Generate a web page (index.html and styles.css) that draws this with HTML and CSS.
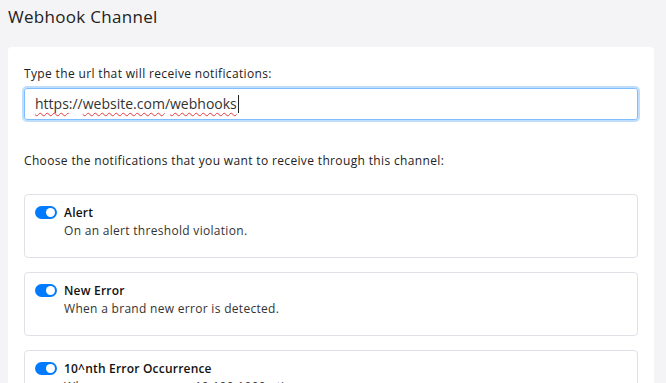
FILE: index.html
```html
<!DOCTYPE html>
<html>
<head>
<meta charset="utf-8">
<link rel="stylesheet" href="styles.css">
</head>
<body>
<div class="page">
  <h1 class="title">Webhook Channel</h1>
  <div class="card">
    <div class="label">Type the url that will receive notifications:</div>
    <div class="input"><span class="sp">https</span>://<span class="sp">website.com</span>/<span class="sp">webhooks</span><span class="caret"></span></div>
    <div class="label choose">Choose the notifications that you want to receive through this channel:</div>
    <div class="opts">
      <div class="opt">
        <span class="toggle"><span class="knob"></span></span>
        <div class="txt">
          <div class="name">Alert</div>
          <div class="desc">On an alert threshold violation.</div>
        </div>
      </div>
      <div class="opt">
        <span class="toggle"><span class="knob"></span></span>
        <div class="txt">
          <div class="name">New Error</div>
          <div class="desc">When a brand new error is detected.</div>
        </div>
      </div>
      <div class="opt">
        <span class="toggle"><span class="knob"></span></span>
        <div class="txt">
          <div class="name">10^nth Error Occurrence</div>
          <div class="desc">When an error occurs 10,100,1000+ times.</div>
        </div>
      </div>
    </div>
  </div>
</div>
</body>
</html>
```
FILE: styles.css
```css
html, body { margin: 0; padding: 0; background: #f4f4f6; }
body { font-family: "Open Sans", "Liberation Sans", sans-serif; color: #212529; overflow: hidden; }
.page { padding: 0 12px 0 8px; }
.title { margin: 0; padding-top: 5px; height: 42px; font-size: 17px; letter-spacing: 0.3px; font-weight: 400; color: #222; line-height: 24px; }
.card { background: #fff; border-radius: 4px; padding: 18px 16px 20px 16px; }
.label { font-size: 12px; letter-spacing: 0.35px; line-height: 18px; color: #222; }
.input { margin-top: 5px; height: 30px; border: 1px solid #80bdff; border-radius: 3px; box-shadow: 0 0 0 2px rgba(0,123,255,.25); padding: 0 10px; font-size: 14px; line-height: 30px; color: #333; display: flex; align-items: center; }
.sp { text-decoration: underline wavy #e53935; text-decoration-thickness: 1px; text-underline-offset: 3px; }
.caret { width: 1px; height: 18px; background: #222; margin-left: 1px; }
.choose { margin-top: 32px; }
.opts { margin-top: 24px; display: flex; flex-direction: column; gap: 14px; }
.opt { box-sizing: border-box; border: 1px solid #dee2e6; border-radius: 4px; height: 64px; padding: 10px 10px 0 10px; display: flex; gap: 7px; }
.toggle { flex: none; width: 22px; height: 13px; margin-top: 1px; border-radius: 7px; background: #007bff; position: relative; }
.knob { position: absolute; right: 2px; top: 2px; width: 9px; height: 9px; border-radius: 50%; background: #fff; }
.name { font-size: 12px; font-weight: 600; line-height: 16px; color: #111; letter-spacing: 0.2px; }
.desc { font-size: 12px; letter-spacing: 0.3px; line-height: 18px; color: #333; margin-top: 1px; }
```
